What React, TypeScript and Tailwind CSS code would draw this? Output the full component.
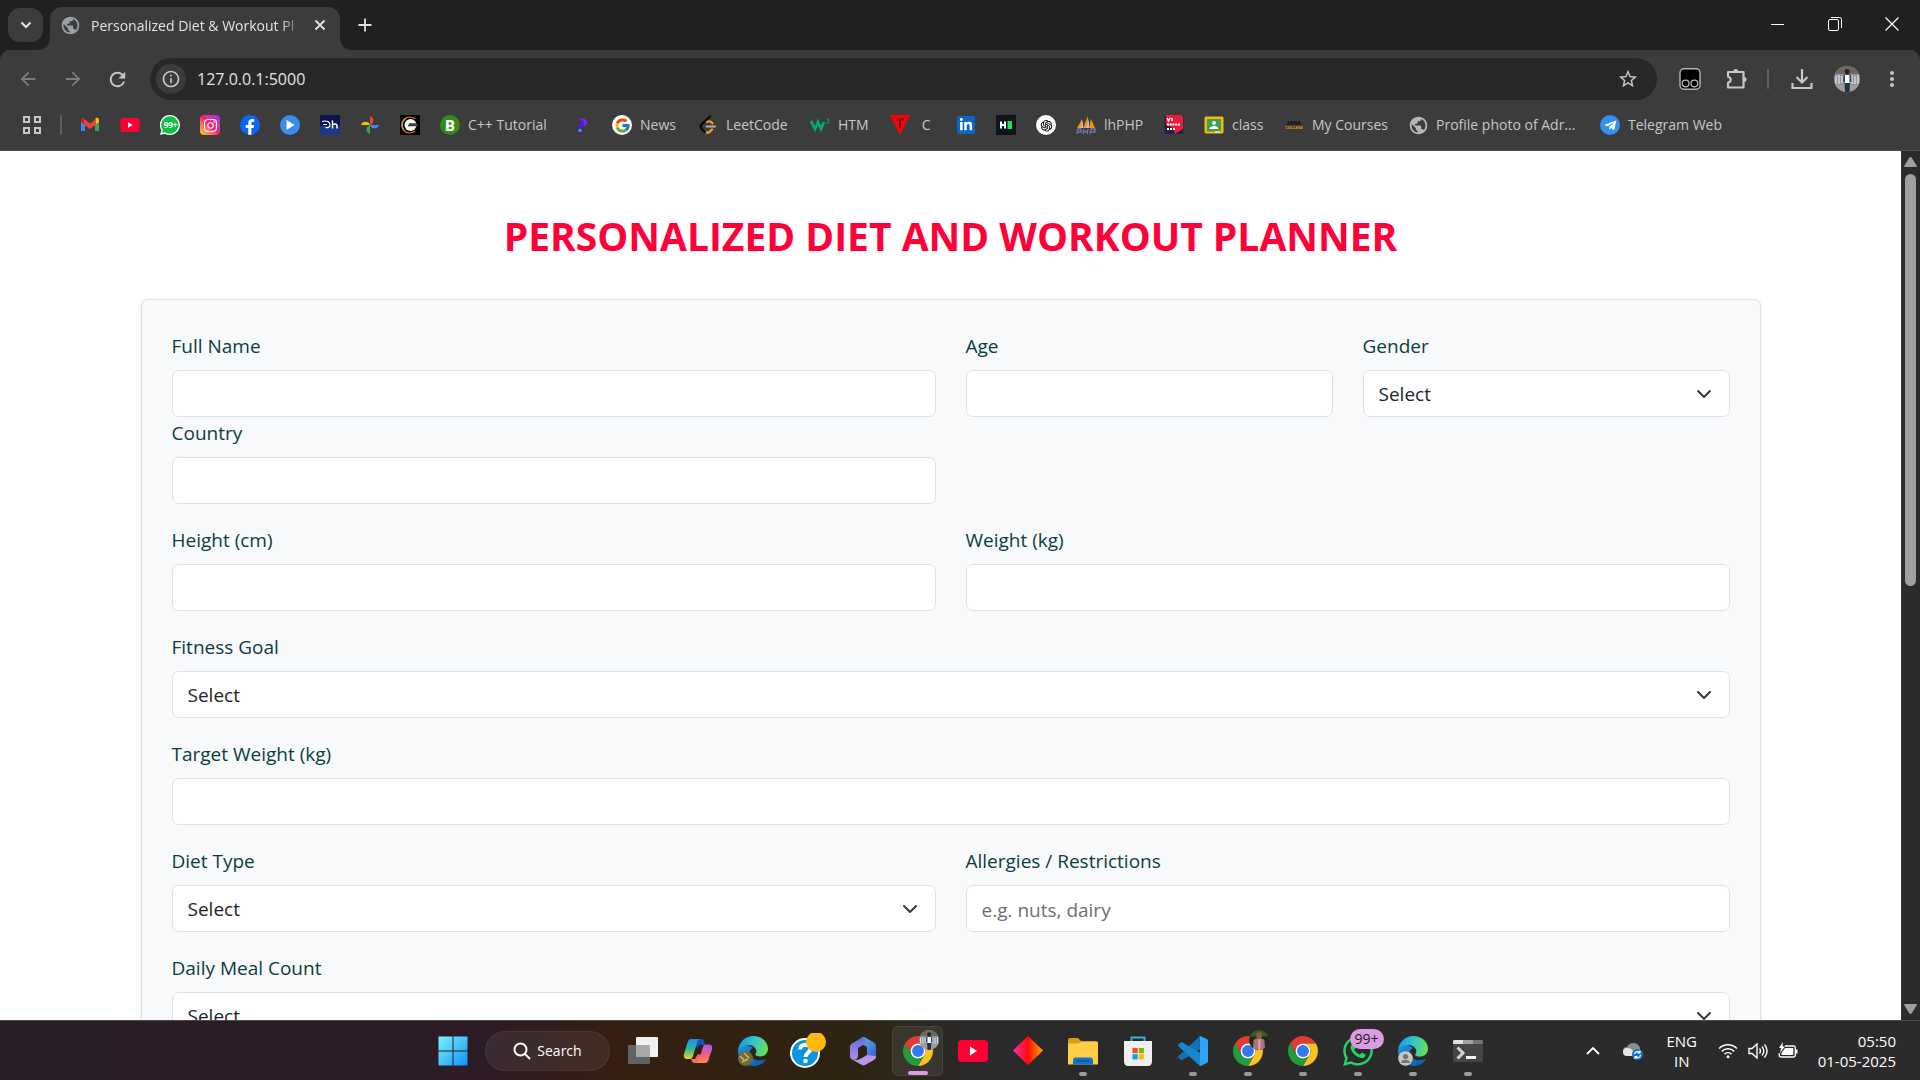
import React, { useId } from "react";
import {
  MdArrowBack,
  MdArrowForward,
  MdInfoOutline,
  MdMoreVert,
  MdPublic,
  MdRefresh,
  MdStarOutline,
} from "react-icons/md";
import { FaInstagram, FaTelegramPlane, FaWhatsapp, FaLinkedinIn, FaFacebookF } from "react-icons/fa";
import { FcGoogle } from "react-icons/fc";
import { AiOutlineOpenAI } from "react-icons/ai";

/* ---------- Browser glyphs ---------- */

const Gmail = () => (
  <svg viewBox="0 0 20 20" className="size-5">
    <path d="M1 5v11h4V9z" fill="#4285f4" />
    <path d="M19 5v11h-4V9z" fill="#34a853" />
    <path d="M5 5.500V10L1 7V5c0-2 2-2.800 3.500-1.800z" fill="#c5221f" />
    <path d="M15 5.500V10l4-3V5c0-2-2-2.800-3.500-1.800z" fill="#fbbc04" />
    <path d="M4 4l6 4.500L16 4v5.500l-6 4.500-6-4.500z" fill="#ea4335" />
  </svg>
);

const YouTube = ({ className }: { className: string }) => (
  <svg viewBox="0 0 30 22" className={className}>
    <rect width="30" height="22" rx="4" fill="#f03" />
    <path d="M12 6.500v9l7-4.500z" fill="#fff" />
  </svg>
);

const WhatsAppUnread = () => (
  <svg viewBox="0 0 20 20" className="size-5">
    <path d="M10 0a10 10 0 1 1-5 18.700L0 20l1.400-4.800A10 10 0 0 1 10 0z" fill="#fff" />
    <path d="M10 1.300a8.700 8.700 0 1 1-5 15.900l-3 .9.900-3A8.700 8.700 0 0 1 10 1.300z" fill="#0cc143" />
    <text x="10.500" y="13" fontSize="8" fontWeight="700" fill="#fff" textAnchor="middle">
      99+
    </text>
  </svg>
);

const Instagram = () => (
  <span className="grid size-5 place-items-center rounded bg-linear-to-tr from-[#ffc400] via-[#ff0f6b] to-[#9a12f0] text-white">
    <FaInstagram size={15} />
  </span>
);

const Facebook = () => (
  <span className="flex size-5 items-end justify-center overflow-hidden rounded-full bg-[#0866ff] text-white">
    <FaFacebookF size={16} />
  </span>
);

const PlayCircle = () => (
  <svg viewBox="0 0 20 20" className="size-5">
    <circle cx="10" cy="10" r="10" fill="#3b8cf0" />
    <path d="M6.500 5v10l8-5z" fill="#fff" />
  </svg>
);

const Hotstar = () => (
  <svg viewBox="0 0 20 20" className="size-5">
    <rect width="20" height="20" fill="#0c1450" />
    <rect y="11" width="20" height="9" fill="#1b3787" />
    <path d="M2 6.500c5-1.500 8 .5 8 3.500 0 2.500-2.500 3-4.500 2.500M3 9.500h4" stroke="#fff" strokeWidth="1.200" fill="none" />
    <path d="M12.500 5.500v8M12.500 10.500c1-2 4.500-2 4.500.5v2.500" stroke="#fff" strokeWidth="1.500" fill="none" />
  </svg>
);

const Photos = () => (
  <svg viewBox="0 0 20 20" className="size-5">
    <path d="M10 1a4.700 4.700 0 0 1 0 9z" fill="#ea4335" />
    <path d="M19 10a4.700 4.700 0 0 1-9 0z" fill="#4285f4" />
    <path d="M10 19a4.700 4.700 0 0 1 0-9z" fill="#34a853" />
    <path d="M1 10a4.700 4.700 0 0 1 9 0z" fill="#fbbc04" />
  </svg>
);

const RingBadge = () => (
  <svg viewBox="0 0 20 20" className="size-5">
    <rect width="20" height="20" fill="#050505" />
    <path d="M15 4A8 8 0 1 0 15 16" stroke="#e5703a" strokeWidth="1.200" fill="none" />
    <path d="M6 3.200A8 8 0 0 0 4 15" stroke="#8fb84a" strokeWidth="1.200" fill="none" />
    <circle cx="10.500" cy="10" r="6" fill="#f5f5f5" />
    <path d="M8 10.500h10M9 9h8" stroke="#3d3d3d" strokeWidth="1.300" />
  </svg>
);

const BadgeB = () => (
  <svg viewBox="0 0 20 20" className="size-5">
    <circle cx="10" cy="10" r="10" fill="#338a17" />
    <text x="10" y="15.500" fontFamily="Roboto, sans-serif" fontSize="15" fontWeight="900" fill="#fff" textAnchor="middle">
      B
    </text>
  </svg>
);

const QuestionMark = () => (
  <svg viewBox="0 0 20 20" className="size-5">
    <path d="M6 3l7 1 2.500 3.500L13 11H9.500l2-3z" fill="#8a24f5" />
    <path d="M6 3l6 3.500L11 9z" fill="#4b1bd6" />
    <path d="M6.500 10l6-1.500-1 3-2 1v2h-3z" fill="#5b0ff0" />
    <path d="M6.500 14h3v3h-3z" fill="#16a8f4" />
  </svg>
);

const Google = () => (
  <span className="grid size-5 place-items-center rounded-full bg-white">
    <FcGoogle size={17} />
  </span>
);

const LeetCode = () => (
  <svg viewBox="0 0 20 20" className="size-5" fill="none" strokeLinecap="round" strokeWidth="2.200">
    <path d="M14 14.500l-2 2c-1.500 1.500-3.500 1.500-5 0" stroke="#ffa116" />
    <path d="M9 7c1-1 3-1 4 0l1.500 1.300" stroke="#ffa116" />
    <path d="M12 1.500L3.500 9.500c-1.200 1.200-1.200 3 0 4.200L7 17" stroke="#070707" />
    <path d="M8.500 11.500H17" stroke="#b3b3b3" strokeWidth="1.800" />
  </svg>
);

const W3 = () => (
  <svg viewBox="0 0 20 20" className="size-5" fill="none" stroke="#04aa6d">
    <path d="M1 6l4 8 3-7 3 7 3-7" strokeWidth="2.800" />
    <path d="M16.500 4h2.500l-1.200 2c2 0 1.500 3-1.300 2" strokeWidth="1" />
  </svg>
);

const TriangleT = () => (
  <svg viewBox="0 0 20 20" className="size-5">
    <path d="M0 0h20L10 20z" fill="#f00" />
    <path d="M6 4.500h8M10 4.500V13" stroke="#6d1414" strokeWidth="2" />
  </svg>
);

const LinkedIn = () => (
  <span className="grid size-[18px] place-items-center rounded-xs bg-[#0a66c2] text-white">
    <FaLinkedinIn size={14} />
  </span>
);

const HackerRank = () => (
  <svg viewBox="0 0 20 20" className="size-5">
    <rect width="20" height="20" fill="#0e141e" />
    <path d="M5 6.500v7M9 6.500v7M5 10h4" stroke="#fff" strokeWidth="2" />
    <path d="M11.500 6H16v8h-4.500z" fill="#1fe05a" />
  </svg>
);

const ChatGpt = () => (
  <span className="grid size-5 place-items-center rounded-full bg-white text-black">
    <AiOutlineOpenAI size={15} />
  </span>
);

const PhpSails = () => (
  <svg viewBox="0 0 20 20" className="size-5">
    <path d="M1 13L6 4v9zM7 13l5-12v12zM13 13l2-9 4 9z" fill="#f29111" />
    <path d="M4 13l3-8v8zM10 13l3-9v9z" fill="#bcbcc0" />
    <path d="M1 19l1-5h3v3H2M8 14l-1 5M7 16.500h4M12 14l-1 5M14 19l1-5h4v3h-4" stroke="#6c78af" strokeWidth="1.400" fill="none" />
  </svg>
);

const Movies = () => (
  <svg viewBox="0 0 20 20" className="size-5">
    <rect x=".5" y=".5" width="19" height="18.500" rx="2" fill="#1c2541" />
    <path d="M2 0h15l2 2v12l-8 5-2-6-7-3z" fill="#ec1c36" />
    <path d="M3 3l1.500 3L6 3M8 3v3" stroke="#fff" strokeWidth="1.400" fill="none" />
    <path d="M3 9.500h13" stroke="#fff" strokeWidth="2" strokeDasharray="2 .7" />
    <path d="M3 14h8" stroke="#fff" strokeWidth="2" strokeDasharray="2 1" />
  </svg>
);

const Classroom = () => (
  <svg viewBox="0 0 20 20" className="size-5">
    <rect x=".5" y="1.500" width="19" height="17" rx="1.500" fill="#f4b912" />
    <rect x="3" y="4" width="14" height="12.500" fill="#3f9d54" />
    <circle cx="10" cy="8" r="1.900" fill="#fff" />
    <path d="M5.500 14c0-4 9-4 9 0z" fill="#fff" />
    <path d="M11 16.500h5v1h-5z" fill="#fff" />
  </svg>
);

const Apna = () => (
  <svg viewBox="0 0 20 20" className="size-5" fontWeight="700" textAnchor="middle">
    <text x="10" y="9.500" fontSize="5" fill="#0a0a0a">
      APNA
    </text>
    <text x="10" y="14" fontSize="4" fill="#e8960c">
      COLLEGE
    </text>
  </svg>
);

const Telegram = () => (
  <span className="grid size-5 place-items-center rounded-full bg-[#3390ec] text-white">
    <FaTelegramPlane size={13} />
  </span>
);

const Globe = () => <MdPublic size={21} className="text-[#b4b8bd]" />;

const bookmarks: { icon: () => React.ReactElement; label?: string; name: string; width?: string }[] = [
  { icon: Gmail, name: "Gmail" },
  { icon: () => <YouTube className="h-3.5 w-5" />, name: "YouTube" },
  { icon: WhatsAppUnread, name: "WhatsApp" },
  { icon: Instagram, name: "Instagram" },
  { icon: Facebook, name: "Facebook" },
  { icon: PlayCircle, name: "Player" },
  { icon: Hotstar, name: "Hotstar" },
  { icon: Photos, name: "Photos" },
  { icon: RingBadge, name: "Zee" },
  { icon: BadgeB, name: "C++ Tutorial", label: "C++ Tutorial", width: "min-w-[84px]" },
  { icon: QuestionMark, name: "Questions" },
  { icon: Google, name: "News", label: "News", width: "min-w-[38px]" },
  { icon: LeetCode, name: "LeetCode", label: "LeetCode", width: "min-w-16" },
  { icon: W3, name: "HTM", label: "HTM", width: "min-w-8" },
  { icon: TriangleT, name: "C", label: "\u00a0C", width: "min-w-[18px]" },
  { icon: LinkedIn, name: "LinkedIn" },
  { icon: HackerRank, name: "HackerRank" },
  { icon: ChatGpt, name: "ChatGPT" },
  { icon: PhpSails, name: "lhPHP", label: "lhPHP", width: "min-w-10" },
  { icon: Movies, name: "Movies" },
  { icon: Classroom, name: "class", label: "class", width: "min-w-8" },
  { icon: Apna, name: "My Courses", label: "My Courses", width: "min-w-19" },
  { icon: Globe, name: "Profile photo", label: "Profile photo of Adr...", width: "min-w-36" },
  { icon: Telegram, name: "Telegram Web", label: "Telegram Web" },
];

const Avatar = ({ className, tone }: { className: string; tone: "street" | "garden" }) => {
  const id = useId();
  const street = tone === "street";
  return (
    <svg viewBox="0 0 26 26" className={className}>
      <clipPath id={id}>
        <circle cx="13" cy="13" r="13" />
      </clipPath>
      <g clipPath={`url(#${id})`}>
        <rect width="26" height="26" fill={street ? "#8b97a5" : "#24361c"} />
        <path d="M0 0h26v8H0z" fill={street ? "#6d6a5c" : "#3d5a2b"} />
        <path d="M2 10v8M5 9v9M8 10v7M18 9v9M21 10v8M24 9v9" stroke={street ? "#d5dde6" : "#18240f"} strokeWidth="1.300" />
        <path d="M0 19h26v7H0z" fill={street ? "#a49b93" : "#33261d"} />
        {street ? (
          <>
            <path d="M9.500 9c2-1.500 5.500-1.500 7.500 0l.5 7h-8.500z" fill="#39404e" />
            <path d="M11 9h4.500v8H11z" fill="#fff" />
            <path d="M10.500 17h5.500l-.5 9h-4.500z" fill="#22304a" />
            <circle cx="13.200" cy="5.500" r="2.500" fill="#2d211e" />
          </>
        ) : (
          <>
            <path d="M6 13c3-3 11-3 14 0l1 13H5z" fill="#b0707f" />
            <path d="M12 12h3v14h-3z" fill="#d3a3ab" />
            <circle cx="13.200" cy="7" r="3.800" fill="#8f5a3f" />
          </>
        )}
      </g>
    </svg>
  );
};

/* ---------- Browser chrome ---------- */

const winButton = "grid h-12 w-[57px] place-items-center";

const TabStrip = () => (
  <div className="flex h-[50px] shrink-0 bg-[#1f2120] text-[#e3e3e3]">
    <button aria-label="Search tabs" className="my-2 ml-2 grid h-[34px] w-[35px] place-items-center rounded-xl bg-[#3c3c3c]">
      <svg viewBox="0 0 12 8" className="h-2 w-3" fill="none" stroke="currentColor" strokeWidth="2">
        <path d="M1.500 1.500L6 6l4.500-4.500" />
      </svg>
    </button>
    <div className="relative mt-[7px] ml-[7px] flex w-[290px] items-center rounded-t-xl bg-[#3c3c3c] pr-2.5 pb-[7px] pl-2.5">
      <svg viewBox="0 0 12 12" className="absolute -left-3 bottom-0 size-3" fill="#3c3c3c">
        <path d="M12 0v12H0A12 12 0 0 0 12 0z" />
      </svg>
      <svg viewBox="0 0 12 12" className="absolute -right-3 bottom-0 size-3" fill="#3c3c3c">
        <path d="M0 0v12h12A12 12 0 0 1 0 0z" />
      </svg>
      <MdPublic size={21} className="shrink-0 text-[#9aa0a6]" />
      <span className="ml-2.5 min-w-0 flex-1 mask-r-from-90% text-[14px] whitespace-nowrap">
        Personalized Diet &amp; Workout Pl
      </span>
      <button aria-label="Close tab" className="ml-2 grid size-5 place-items-center">
        <svg viewBox="0 0 12 12" className="size-3" stroke="currentColor" strokeWidth="1.800">
          <path d="M1.500 1.500l9 9M10.500 1.500l-9 9" />
        </svg>
      </button>
    </div>
    <button aria-label="New tab" className="my-2 ml-2 grid size-[34px] place-items-center">
      <svg viewBox="0 0 14 14" className="size-3.5" stroke="currentColor" strokeWidth="1.800">
        <path d="M7 .5v13M.5 7h13" />
      </svg>
    </button>
    <div className="ml-auto flex text-white">
      <button aria-label="Minimize" className={winButton}>
        <span className="h-px w-[13px] bg-white" />
      </button>
      <button aria-label="Restore" className={winButton}>
        <svg viewBox="0 0 14 14" className="size-3.5" fill="none" stroke="currentColor">
          <rect x=".5" y="2.500" width="10" height="11" rx="1.500" />
          <path d="M3 .5h8.500a2 2 0 0 1 2 2V11" />
        </svg>
      </button>
      <button aria-label="Close" className={winButton}>
        <svg viewBox="0 0 14 14" className="size-3.5" stroke="currentColor" strokeWidth="1.200">
          <path d="M.5.5l13 13M13.500.5l-13 13" />
        </svg>
      </button>
    </div>
  </div>
);

const navButton = "grid w-[45px] place-items-center";

const Toolbar = () => (
  <div className="flex h-[58px] items-center pl-[5px] text-[#c7c7c7]">
    <button aria-label="Back" className={navButton + " text-[#7d7d7d]"}>
      <MdArrowBack size={22} />
    </button>
    <button aria-label="Forward" className={navButton + " text-[#7d7d7d]"}>
      <MdArrowForward size={22} />
    </button>
    <button aria-label="Reload" className={navButton}>
      <MdRefresh size={23} />
    </button>
    <div className="ml-2.5 flex h-[42px] flex-1 items-center rounded-full bg-[#282828] pr-[18px] pl-1.5">
      <button aria-label="Site information" className="grid size-[30px] place-items-center rounded-full bg-[#3c3c3c]">
        <MdInfoOutline size={20} />
      </button>
      <input
        aria-label="Address"
        defaultValue="127.0.0.1:5000"
        className="ml-[11px] min-w-0 flex-1 bg-transparent text-base text-[#e3e3e3] outline-none"
      />
      <button aria-label="Bookmark this tab">
        <MdStarOutline size={22} />
      </button>
    </div>
    <button aria-label="Tampermonkey" className="ml-[22px]">
      <svg viewBox="0 0 22 22" className="size-[22px]">
        <rect x="1" y=".7" width="20" height="20.600" rx="4" fill="#000" stroke="#b5b5b5" strokeWidth="1.400" />
        <circle cx="6.600" cy="15.500" r="3.400" fill="none" stroke="#b5b5b5" strokeWidth="1.300" />
        <circle cx="15.400" cy="15.500" r="3.400" fill="none" stroke="#b5b5b5" strokeWidth="1.300" />
      </svg>
    </button>
    <button aria-label="Extensions" className="ml-6">
      <svg viewBox="0 0 24 24" className="size-6" fill="none" stroke="currentColor" strokeWidth="2.200" strokeLinejoin="round">
        <path d="M3 5h15.500v15.500H3v-4.700c3.500-.8 3.500-5.300 0-6.100z" />
        <path d="M8.300 4.500a2.500 2.500 0 0 1 5 0zM19 10a2.500 2.500 0 0 1 0 5z" fill="currentColor" stroke="none" />
      </svg>
    </button>
    <span className="ml-[18px] h-5 w-0.5 rounded bg-[#5f5f5f]" />
    <button aria-label="Downloads" className="ml-[22px]">
      <svg viewBox="0 0 22 22" className="size-[22px]" fill="none" stroke="currentColor" strokeWidth="2.200">
        <path d="M11 1v13M5.500 9l5.500 5.500L16.500 9M1.500 15v5h19v-5" />
      </svg>
    </button>
    <button aria-label="Profile" className="ml-[21px]">
      <Avatar className="size-[26px]" tone="street" />
    </button>
    <button aria-label="Menu" className="mr-4 ml-5">
      <MdMoreVert size={24} />
    </button>
  </div>
);

const Bookmarks = () => (
  <nav
    aria-label="Bookmarks"
    className="flex h-[42px] items-center overflow-hidden pb-2 text-[14px] whitespace-nowrap text-[#c7c7c7]"
  >
    <button aria-label="Apps" className="ml-[23px]">
      <svg viewBox="0 0 18 18" className="size-[18px]" fill="none" stroke="currentColor" strokeWidth="2">
        <path d="M1 1h5v5H1zM12 1h5v5h-5zM1 12h5v5H1zM12 12h5v5h-5z" />
      </svg>
    </button>
    <span className="mr-2 ml-[19px] h-5 w-0.5 rounded bg-[#5f5f5f]" />
    {bookmarks.map(({ icon: Icon, label, name, width = "" }) => (
      <a key={name} href="#" aria-label={name} className="flex items-center gap-2 px-2.5">
        <span className="grid size-5 place-items-center">
          <Icon />
        </span>
        {label && <span className={"pb-0.5 " + width}>{label}</span>}
      </a>
    ))}
  </nav>
);

/* ---------- Planner page ---------- */

const control =
  "block h-[47px] w-full rounded-[7px] border border-[#dee2e6] bg-white px-[15px] pt-0.5 text-[19px] text-[#212529] outline-none placeholder:text-[#6b6f73]";

const Field = ({
  id,
  label,
  type = "text",
  placeholder,
  options,
  className = "",
}: {
  id: string;
  label: string;
  type?: string;
  placeholder?: string;
  options?: string[];
  className?: string;
}) => (
  <div className={className}>
    <label htmlFor={id} className="mb-2 block text-[19px] leading-8 text-[#0b3d41]">
      {label}
    </label>
    {options ? (
      <div className="relative">
        <select id={id} className={control + " appearance-none"}>
          <option>Select</option>
          {options.map((option) => (
            <option key={option}>{option}</option>
          ))}
        </select>
        <svg
          viewBox="0 0 20 20"
          className="pointer-events-none absolute top-1/2 right-4 size-5 -translate-y-1/2"
          fill="none"
          stroke="#343a40"
          strokeWidth="2"
          strokeLinecap="round"
          strokeLinejoin="round"
        >
          <path d="M4 7l6 6 6-6" />
        </svg>
      </div>
    ) : (
      <input id={id} type={type} placeholder={placeholder} className={control} />
    )}
  </div>
);

const Page = () => (
  <main className="min-w-0 flex-1 overflow-hidden bg-white">
    <div className="mx-auto max-w-[1650px] px-[15px] pt-[60px]">
      <h1 className="mb-[38px] text-center text-[39px] leading-[50px] font-bold text-[#ff0038]">
        PERSONALIZED DIET AND WORKOUT PLANNER
      </h1>
      <form className="rounded-[7px] border border-[#dee2e6] bg-[#f8f9fb] p-[30px] shadow-sm">
        <div className="mb-5 grid grid-cols-4 gap-x-[30px]">
          <Field id="name" label="Full Name" className="col-span-2" />
          <Field id="age" label="Age" />
          <Field id="gender" label="Gender" options={["Male", "Female", "Other"]} />
          <Field id="country" label="Country" className="col-span-2" />
        </div>
        <div className="mb-5 grid grid-cols-2 gap-x-[30px]">
          <Field id="height" label="Height (cm)" />
          <Field id="weight" label="Weight (kg)" />
        </div>
        <Field id="goal" label="Fitness Goal" options={["Weight Loss", "Muscle Gain"]} className="mb-5" />
        <Field id="target" label="Target Weight (kg)" className="mb-5" />
        <div className="mb-5 grid grid-cols-2 gap-x-[30px]">
          <Field id="diet" label="Diet Type" options={["Vegetarian", "Vegan"]} />
          <Field id="allergies" label="Allergies / Restrictions" placeholder="e.g. nuts, dairy" />
        </div>
        <Field id="meals" label="Daily Meal Count" options={["3", "4", "5"]} />
      </form>
    </div>
  </main>
);

const Scrollbar = () => (
  <div className="flex w-[19px] shrink-0 flex-col items-center bg-[#2b2b2b] py-1.5" aria-hidden="true">
    <svg viewBox="0 0 13 10" className="h-2.5 w-[13px]" fill="#9f9f9f">
      <path d="M6.500 0c.6 0 1 .3 1.400.9L13 9.200c0 .5-.3.800-.8.800H.8C.3 10 0 9.700 0 9.200L5.100.9C5.500.3 5.900 0 6.500 0z" />
    </svg>
    <div className="my-[7px] min-h-0 w-full flex-1 px-1">
      <div className="h-1/2 w-[11px] rounded-full bg-[#9f9f9f]" />
    </div>
    <svg viewBox="0 0 13 10" className="h-2.5 w-[13px] rotate-180" fill="#9f9f9f">
      <path d="M6.500 0c.6 0 1 .3 1.400.9L13 9.200c0 .5-.3.800-.8.800H.8C.3 10 0 9.700 0 9.200L5.100.9C5.500.3 5.900 0 6.500 0z" />
    </svg>
  </div>
);

/* ---------- Taskbar ---------- */

const Chrome = () => (
  <svg viewBox="4 4 40 40" className="size-[30px]">
    <path d="M6.680 14A20 20 0 0 1 41.320 14L24 14A10 10 0 0 0 15.340 29z" fill="#e33b2e" />
    <path d="M41.320 14A20 20 0 0 1 24 44L32.660 29A10 10 0 0 0 24 14z" fill="#fcc31e" />
    <path d="M24 44A20 20 0 0 1 6.680 14L15.340 29A10 10 0 0 0 32.660 29z" fill="#249a41" />
    <circle cx="24" cy="24" r="10" fill="#fff" />
    <circle cx="24" cy="24" r="7.900" fill="#3478ec" />
  </svg>
);

const Edge = ({ children }: { children?: React.ReactNode }) => {
  const id = useId();
  return (
    <svg viewBox="0 0 30 30" className="size-[30px]">
      <defs>
        <linearGradient id={id + "t"} x1="0" y1=".4" x2="1" y2=".6">
          <stop offset="0" stopColor="#159bdc" />
          <stop offset=".5" stopColor="#33c7c9" />
          <stop offset="1" stopColor="#6ae04e" />
        </linearGradient>
        <linearGradient id={id + "b"} x1="0" y1="0" x2="1" y2="1">
          <stop offset="0" stopColor="#1798e8" />
          <stop offset="1" stopColor="#0f55a5" />
        </linearGradient>
      </defs>
      <path d="M0 15C0 23 7 30 16 30c5 0 9.500-2.500 11.500-6 .3-.6-.2-1-.8-.7C20 26 12 23 11.500 17c0-2 1-4 3.500-5C10 7 1 8 0 15z" fill={`url(#${id}b)`} />
      <path d="M0 15C.5 6.500 7 0 15 0c9 0 15 6 15 12.500 0 5.500-4 8-8 8-3.500 0-5.500-1.200-4.500-2.600C20 15 17 9 10.500 9 5 9 1 11.500 0 15z" fill={`url(#${id}t)`} />
      {children}
    </svg>
  );
};

const StartLogo = () => {
  const id = useId();
  return (
    <svg viewBox="0 0 30 30" className="size-[30px]">
      <linearGradient id={id} x1="0" y1="0" x2="30" y2="30" gradientUnits="userSpaceOnUse">
        <stop offset="0" stopColor="#82f3ff" />
        <stop offset="1" stopColor="#0a93f5" />
      </linearGradient>
      <path d="M.5.5h14v14H.5zM15.500.5h14v14h-14zM.5 15.500h14v14H.5zM15.500 15.500h14v14h-14z" fill={`url(#${id})`} />
    </svg>
  );
};

const TaskView = () => (
  <svg viewBox="0 0 30 30" className="size-[30px]">
    <rect x="8" y="1" width="22" height="20" rx="1" fill="#f1f1f1" />
    <rect x="0" y="9" width="22" height="19" rx="1" fill="#626262" />
    <path d="M8 9h14v12H8z" fill="#a9a9a9" />
  </svg>
);

const Copilot = () => {
  const id = useId();
  return (
    <svg viewBox="0 0 30 30" className="size-[30px]">
      <defs>
        <linearGradient id={id + "a"} x1="0" y1="0" x2="0" y2="1">
          <stop offset="0" stopColor="#1e8df0" />
          <stop offset=".5" stopColor="#2db7a0" />
          <stop offset="1" stopColor="#f5cd1f" />
        </linearGradient>
        <linearGradient id={id + "b"} x1="0" y1="0" x2="0" y2="1">
          <stop offset="0" stopColor="#a35cf0" />
          <stop offset=".5" stopColor="#ec5d8d" />
          <stop offset="1" stopColor="#ff8b45" />
        </linearGradient>
      </defs>
      <path d="M8 3h10c2.500 0 3 2 3.500 4l.5 2h-4c-2 0-3 1-3.500 3z" fill="#174fc0" />
      <path d="M12 27h9c3 0 4-1.500 5-4.500L15 18l-3 5H8c.5 2 1.500 4 4 4z" fill="#fb6d4e" />
      <path d="M8.500 3H17c-2 .5-2.500 2-3 4l-4 13c-.5 2-1.500 3-3.500 3H4c-3 0-3.500-2.500-3-5L4.500 6.500C5 4.500 6 3 8.500 3z" fill={`url(#${id}a)`} />
      <path d="M21.500 27H13c2-.5 2.500-2 3-4l4-12c.5-2 1.500-2.500 3.500-2.500H26c3 0 3.500 2.500 3 5L25.500 23.500c-.7 2-1.700 3.500-4 3.500z" fill={`url(#${id}b)`} />
    </svg>
  );
};

const Help = () => (
  <svg viewBox="0 0 36 36" className="size-9">
    <circle cx="15" cy="20" r="14" fill="#0a95dc" stroke="#fff" strokeWidth="2" />
    <path d="M10 16.500c0-6.500 11-6 10.500-.5-.3 3.500-5 4-5 8" stroke="#fff" strokeWidth="4" fill="none" />
    <circle cx="15.500" cy="28" r="2.300" fill="#fff" />
    <circle cx="26" cy="9" r="10" fill="#ffb90f" />
  </svg>
);

const Office = () => {
  const id = useId();
  return (
    <svg viewBox="0 0 30 30" className="size-[30px]">
      <defs>
        <linearGradient id={id} x1="0" y1="0" x2="1" y2="1">
          <stop offset="0" stopColor="#6fb4f2" />
          <stop offset="1" stopColor="#2b5fc7" />
        </linearGradient>
        <linearGradient id={id + "p"} x1="0" y1="0" x2="0" y2="1">
          <stop offset="0" stopColor="#5b6fd6" />
          <stop offset="1" stopColor="#b18cf0" />
        </linearGradient>
      </defs>
      <path d="M14 1.500c1-.6 2-.6 3 0l9 5c1.500 1 2 2 2 3.500v9c0 2-.6 3-2 4l-7-4v-8l-8-4.500z" fill={`url(#${id})`} />
      <path d="M15 1L4 7.500C2.500 8.500 2 9.500 2 11v9c0 1.500.5 2.500 2 3.500 3 1 6-.5 6-3.500v-8l6-3.500c2-1.500 2-5.500-1-7.500z" fill={`url(#${id}p)`} />
      <path d="M4 23.500l10 5.500c1 .6 2 .6 3 0l9-5c1.500-1 2-2 2-4l-9-1-6 3.500c-3 1.700-6 2-9 1z" fill="#b994ea" />
    </svg>
  );
};

const Diamond = () => {
  const id = useId();
  return (
    <svg viewBox="0 0 30 30" className="size-[30px]">
      <linearGradient id={id}>
        <stop offset="0" stopColor="#ff2fa8" />
        <stop offset=".5" stopColor="#ff0a0a" />
        <stop offset="1" stopColor="#ffa800" />
      </linearGradient>
      <path d="M15 0l15 14.500L15 29 0 14.500z" fill={`url(#${id})`} />
    </svg>
  );
};

const Explorer = () => (
  <svg viewBox="0 0 30 30" className="size-[30px]">
    <path d="M0 4c0-1.200.8-2 2-2h8l3 3h15c1 0 2 1 2 2v5H0z" fill="#dc9a10" />
    <path d="M0 7.500h10L13 6h17v22.500H0z" fill="#ffce45" />
    <path d="M5 28.500V24c0-1.500 1-2.500 2.500-2.500h15c1.500 0 2.500 1 2.500 2.500v4.500z" fill="#1173c8" />
    <path d="M8.500 25h13" stroke="#0b4c8a" strokeWidth="1.200" />
  </svg>
);

const Store = () => (
  <svg viewBox="0 0 30 30" className="size-[30px]">
    <path d="M8.500 6V1.500h13V6" stroke="#2cb1ec" strokeWidth="2" fill="none" />
    <path d="M1 5h28v20.500c0 2.500-1.500 4.500-4 4.500H5c-2.500 0-4-2-4-4.500z" fill="#efefef" />
    <path d="M9.500 12h5.200v5.200H9.500z" fill="#f25022" />
    <path d="M15.700 12h5.200v5.200h-5.200z" fill="#7fba00" />
    <path d="M9.500 18.200h5.200v5.200H9.500z" fill="#00a4ef" />
    <path d="M15.700 18.200h5.200v5.200h-5.200z" fill="#ffb900" />
  </svg>
);

const VsCode = () => (
  <svg viewBox="0 0 30 30" className="size-[30px]">
    <path d="M22 0L29 3v6L4.500 24c-.7.500-1.200.4-1.700 0L.5 22c-.6-.6-.6-1.300 0-2z" fill="#0f70b3" />
    <path d="M22 30l7-3v-6L4.500 6.500c-.7-.5-1.200-.4-1.700 0L.5 8.500c-.6.600-.6 1.300 0 2z" fill="#1688cf" />
    <path d="M22 0l7 3.300c.7.300 1 .8 1 1.500v20.400c0 .7-.3 1.200-1 1.500L22 30c-.6.200-1 0-1.300-.5.800.5 1.300 0 1.300-1V1.500c0-1-.5-1.500-1.300-1 .3-.5.700-.7 1.300-.5z" fill="#2ea6f2" />
  </svg>
);

const WhatsAppBadge = () => (
  <span className="relative text-[#25d366]">
    <FaWhatsapp size={34} />
    <span className="absolute -top-[5px] left-[9px] rounded-full bg-[#dc9be2] px-[5px] text-[14px] leading-5 text-[#1b1b1b]">99+</span>
  </span>
);

const Terminal = () => (
  <svg viewBox="0 0 30 30" className="size-[30px]">
    <rect y="4" width="30" height="22" rx="1.500" fill="#454545" />
    <path d="M0 8V5.500C0 4.700.7 4 1.500 4H10v4z" fill="#e0e0e0" />
    <path d="M10 4h10v4H10z" fill="#a2a2a2" />
    <path d="M20 4h8.500c.8 0 1.500.7 1.500 1.500V8H20z" fill="#757575" />
    <path d="M4.500 11.500l5.500 5.500-5.500 5.500" stroke="#d4d4d4" strokeWidth="3" fill="none" />
    <path d="M13 20h10v3H13z" fill="#f2f2f2" />
  </svg>
);

const ChromeWith = ({ tone }: { tone: "street" | "garden" }) => (
  <span className="relative">
    <Chrome />
    <Avatar className="absolute -top-1.5 -right-1.5 size-5" tone={tone} />
  </span>
);

type App = { name: string; icon: React.ReactElement; state?: "open" | "active" };

const apps: App[] = [
  { name: "Task View", icon: <TaskView /> },
  { name: "Copilot", icon: <Copilot /> },
  {
    name: "Edge Beta",
    icon: (
      <Edge>
        <circle cx="7.500" cy="22.500" r="7.500" fill="#6f6a35" />
        <path d="M2 20l4 4M6 17l5 5M4 26l6-3" stroke="#c9b877" strokeWidth="1.500" />
      </Edge>
    ),
  },
  { name: "Help", icon: <Help /> },
  { name: "Microsoft 365", icon: <Office /> },
  { name: "Chrome", icon: <ChromeWith tone="street" />, state: "active" },
  { name: "YouTube", icon: <YouTube className="h-[22px] w-[30px]" /> },
  { name: "Diamond", icon: <Diamond /> },
  { name: "File Explorer", icon: <Explorer />, state: "open" },
  { name: "Microsoft Store", icon: <Store /> },
  { name: "Visual Studio Code", icon: <VsCode />, state: "open" },
  { name: "Chrome profile", icon: <ChromeWith tone="garden" />, state: "open" },
  { name: "Google Chrome", icon: <Chrome />, state: "open" },
  { name: "WhatsApp", icon: <WhatsAppBadge />, state: "open" },
  {
    name: "Edge",
    icon: (
      <Edge>
        <circle cx="7.500" cy="22.500" r="7.300" fill="#c9c5c1" />
        <circle cx="7.500" cy="20.500" r="2.600" fill="#77726e" />
        <path d="M3 27c0-4.500 9-4.500 9 0z" fill="#77726e" />
      </Edge>
    ),
    state: "open",
  },
  { name: "Terminal", icon: <Terminal />, state: "open" },
];

const Taskbar = () => (
  <footer className="grid h-[60px] shrink-0 grid-cols-[1fr_auto_1fr] items-center border-t border-[#4b4a4a] bg-[linear-gradient(90deg,#291e28_0%,#2c1b25_25%,#341f12_32%,#2d2414_45%,#2a2a2a_51%,#2b2b2b_100%)] text-[14px] text-white">
    <span />
    <div className="flex items-center">
      <button aria-label="Start" className="grid w-[55px] place-items-center">
        <StartLogo />
      </button>
      <button className="mr-[5px] ml-[5px] flex h-10 w-[125px] items-center justify-center gap-1.5 rounded-full border border-white/5 bg-white/7">
        <svg viewBox="0 0 18 18" className="size-[18px]" fill="none" stroke="currentColor" strokeWidth="2">
          <circle cx="7.500" cy="7.500" r="6" />
          <path d="M12 12l5 5" />
        </svg>
        Search
      </button>
      {apps.map(({ name, icon, state }) => (
        <button
          key={name}
          aria-label={name}
          className={
            "relative mx-[2px] grid h-[50px] w-[51px] place-items-center rounded-md " +
            (state === "active" ? "border border-white/7 bg-white/7" : "")
          }
        >
          {icon}
          {state === "active" && <span className="absolute bottom-0 h-1 w-5 rounded-full bg-[#dc9be2]" />}
          {state === "open" && <span className="absolute bottom-0 h-1 w-2 rounded-full bg-[#9a9a9a]" />}
        </button>
      ))}
    </div>
    <div className="flex items-center justify-end pr-6">
      <button aria-label="Hidden icons">
        <svg viewBox="0 0 14 8" className="h-2 w-3.5" fill="none" stroke="currentColor" strokeWidth="1.800">
          <path d="M1 7l6-6 6 6" />
        </svg>
      </button>
      <svg viewBox="0 0 20 18" className="ml-[23px] h-[18px] w-5">
        <path d="M4 13a4 4 0 0 1 0-8c2-5 11-6 13 1v6z" fill="#8d8d8d" />
        <path d="M4 14a4 4 0 0 1 0-8c3 0 5 1 6 3l1 5z" fill="#e6e6e6" />
        <circle cx="14.500" cy="12.500" r="5.500" fill="#1b72c4" />
        <path d="M11.500 12a3 3 0 0 1 5.500-1M17.500 13a3 3 0 0 1-5.500 1.500M17 8.500V11h-2.500M12 17v-2.500h2.500" stroke="#fff" strokeWidth="1.200" fill="none" />
      </svg>
      <button className="ml-[23px] w-8 text-center text-[15px] leading-5">
        ENG
        <br />
        IN
      </button>
      <svg viewBox="0 0 20 16" className="ml-5 h-4 w-5" fill="none" stroke="currentColor" strokeWidth="1.500">
        <path d="M1 5.500a12.500 12.500 0 0 1 18 0M3.800 8.400a8.700 8.700 0 0 1 12.400 0M6.500 11.200a5 5 0 0 1 7 0" />
        <circle cx="10" cy="13.800" r="1.500" fill="currentColor" stroke="none" />
      </svg>
      <svg viewBox="0 0 20 18" className="ml-2.5 h-[18px] w-5" fill="none" stroke="currentColor" strokeWidth="1.400">
        <path d="M1 6.500h3L9 2v14l-5-4.500H1z" />
        <path d="M11.500 6.500c1.200 1.500 1.200 3.500 0 5M14 4.500c2.200 2.700 2.200 6.300 0 9M16.500 2.500c3.200 4 3.200 9 0 13" />
      </svg>
      <svg viewBox="0 0 20 18" className="ml-2.5 h-[18px] w-5" fill="none" stroke="currentColor" strokeWidth="1.300">
        <path d="M7 4h8.500c1 0 1.800.8 1.800 1.800v7.400c0 1-.8 1.800-1.800 1.800H3c-1 0-1.800-.8-1.800-1.800V11" />
        <path d="M7 6h8.300v7H3.500V11z" fill="currentColor" stroke="none" />
        <path d="M18 7.500h1.500v4H18z" fill="currentColor" stroke="none" />
        <path d="M5 0L1 6h2l-1 5 5-6.500H4.500z" fill="currentColor" stroke="none" />
      </svg>
      <div className="ml-5 text-right text-[15px] leading-5">
        05:50
        <br />
        01-05-2025
      </div>
    </div>
  </footer>
);

export default function App() {
  return (
    <div className="flex h-screen flex-col overflow-hidden font-['Open_Sans','Noto_Sans',sans-serif]">
      <header className="shrink-0 bg-[#1f2120]">
        <TabStrip />
        <div className="rounded-t-[10px] border-b border-[#4d4d4d] bg-[#3c3c3c]">
          <Toolbar />
          <Bookmarks />
        </div>
      </header>
      <div className="flex min-h-0 flex-1">
        <Page />
        <Scrollbar />
      </div>
      <Taskbar />
    </div>
  );
}
